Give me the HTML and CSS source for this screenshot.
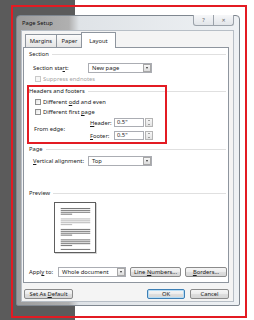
FILE: index.html
```html
<!DOCTYPE html>
<html lang="en">
<head>
  <meta charset="UTF-8">
  <title>Page Setup</title>
  <link rel="stylesheet" href="styles.css">
</head>
<body>
  <div class="shot">
    <div class="dialog">
      <div class="titlebar">
        <span class="title">Page Setup</span>
        <div class="caption">
          <span>?</span>
          <span class="close">✕</span>
        </div>
      </div>

      <div class="client">
        <div class="tabs">
          <div class="tab tab-margins">Margins</div>
          <div class="tab tab-paper">Paper</div>
          <div class="tab tab-layout active">Layout</div>
        </div>

        <div class="panel">
          <!-- Section -->
          <div class="group g-section">Section</div>
          <div class="field f-start">
            <label>Section sta<u>r</u>t:</label>
            <div class="combo"><span>New page</span><span class="drop"></span></div>
          </div>
          <div class="check disabled c-suppress"><span class="box"></span><span>Suppress endnotes</span></div>

          <!-- Headers and footers -->
          <div class="group g-hf">Headers and footers</div>
          <div class="check c-odd"><span class="box"></span><span>Different <u>o</u>dd and even</span></div>
          <div class="check c-first"><span class="box"></span><span>Different first <u>p</u>age</span></div>
          <div class="edge">
            <span class="edge-label">From edge:</span>
            <div class="edge-rows">
              <span><u>H</u>eader:</span>
              <div class="spin"><span class="val">0.5"</span><span class="arrows"><i class="up"></i><i class="down"></i></span></div>
              <span><u>F</u>ooter:</span>
              <div class="spin"><span class="val">0.5"</span><span class="arrows"><i class="up"></i><i class="down"></i></span></div>
            </div>
          </div>

          <!-- Page -->
          <div class="group g-page">Page</div>
          <div class="field f-valign">
            <label><u>V</u>ertical alignment:</label>
            <div class="combo"><span>Top</span><span class="drop"></span></div>
          </div>

          <!-- Preview -->
          <div class="group g-preview">Preview</div>
          <svg class="preview" width="42" height="51" viewBox="0 0 42 51">
            <g fill="#707070">
              <rect x="6" y="5" width="31" height="1"/>
              <rect x="6" y="7" width="31" height="1"/>
              <rect x="6" y="9" width="31" height="1"/>
              <rect x="6" y="11" width="12" height="1"/>
            </g>
            <g fill="#b4b4b4">
              <rect x="6" y="16" width="31" height="1"/>
              <rect x="6" y="18" width="31" height="1"/>
              <rect x="6" y="20" width="31" height="1"/>
              <rect x="6" y="22" width="12" height="1"/>
            </g>
            <g fill="#707070">
              <rect x="6" y="27" width="31" height="1"/>
              <rect x="6" y="29" width="31" height="1"/>
              <rect x="6" y="31" width="31" height="1"/>
              <rect x="6" y="33" width="12" height="1"/>
              <rect x="6" y="38" width="31" height="1"/>
              <rect x="6" y="40" width="31" height="1"/>
              <rect x="6" y="42" width="31" height="1"/>
              <rect x="6" y="44" width="12" height="1"/>
              <rect x="6" y="48" width="31" height="1"/>
            </g>
          </svg>

          <div class="apply">
            <label>Appl<u>y</u> to:</label>
            <div class="combo combo-wide"><span>Whole document</span><span class="drop"></span></div>
            <div class="btn btn-lines"><span>Line <u>N</u>umbers...</span></div>
            <div class="btn btn-borders"><span><u>B</u>orders...</span></div>
          </div>

          <!-- red highlight drawn over the headers group -->
          <div class="callout"></div>
        </div>

        <div class="footer">
          <div class="btn btn-default"><span>Set As <u>D</u>efault</span></div>
          <div class="btn btn-ok"><span>OK</span></div>
          <div class="btn btn-cancel"><span>Cancel</span></div>
        </div>
      </div>
    </div>
  </div>
</body>
</html>
```

FILE: styles.css
```css
/* page background: dark desktop on the left, white on the right */
body {
  margin: 0;
  padding: 5px 0 0 11px;
  box-sizing: border-box;
  width: 254px;
  height: 320px;
  overflow: hidden;
  background: linear-gradient(to right, #5b5b5b 0, #5b5b5b 75px, #fff 75px);
  font-family: "Noto Sans", "DejaVu Sans", sans-serif;
  font-size: 5.8px;
  color: #1b1b1b;
}

u {
  text-decoration-thickness: 1px;
}

/* red outline around the whole dialog */
.shot {
  box-sizing: border-box;
  width: 236px;
  height: 313px;
  border: 2px solid #e31b23;
  padding: 8px 0 0 3px;
}

/* window frame */
.dialog {
  box-sizing: border-box;
  width: 224px;
  height: 291px;
  border: 1px solid #7f8790;
  border-radius: 4px 4px 2px 2px;
  background: linear-gradient(to right, #9d9d9d 0, #b0b0b0 52px, #dfe3e7 62px, #eef1f4 100%);
  padding: 0 5px 3px 4px;
  display: flex;
  flex-direction: column;
}

.titlebar {
  height: 14px;
  flex: none;
  display: flex;
  justify-content: space-between;
  align-items: flex-start;
}
.title {
  line-height: 14px;
  padding-left: 1px;
  color: #111;
}
.caption {
  display: flex;
  margin-top: -1px;
}
.caption span {
  width: 19px;
  height: 10px;
  border: 1px solid #9ba2aa;
  border-top: none;
  background: linear-gradient(#f6f7f9, #e2e5e9);
  color: #666;
  font-size: 6px;
  display: flex;
  align-items: center;
  justify-content: center;
  border-radius: 0 0 0 3px;
}
.caption .close {
  border-left: none;
  border-radius: 0 0 3px 0;
  font-size: 5px;
}

/* client area */
.client {
  flex: 1;
  box-sizing: border-box;
  border: 1px solid #b7bec6;
  background: #f4f4f4;
  padding: 1px 4px 0 1px;
}

.tabs {
  height: 15px;
  display: flex;
  align-items: flex-end;
  padding-left: 2px;
}
.tab {
  box-sizing: border-box;
  height: 13px;
  border: 1px solid #8e959e;
  border-bottom: none;
  border-radius: 1px 1px 0 0;
  background: linear-gradient(#fbfbfb, #e4e4e4);
  display: flex;
  align-items: center;
  justify-content: center;
}
.tab + .tab {
  margin-left: -1px;
}
.tab-margins { width: 32px; }
.tab-paper { width: 27px; }
.tab.active {
  width: 35px;
  height: 16px;
  margin-left: -2px;
  margin-bottom: -1px;
  background: #fff;
  position: relative;
  z-index: 1;
}

.panel {
  box-sizing: border-box;
  height: 236px;
  border: 1px solid #8e959e;
  background: #fff;
  position: relative;
}

/* group headings with the rule that runs to the right */
.group {
  height: 8px;
  display: flex;
  align-items: center;
  padding-left: 5px;
  margin-right: 2px;
}
.group::after {
  content: "";
  flex: 1;
  height: 1px;
  background: #e0e0e0;
  margin-left: 3px;
}
.g-section { margin-top: 2px; }
.g-hf { margin-top: 5px; }
.g-page { margin-top: 5px; }
.g-preview { margin-top: 23px; }

.field {
  display: flex;
  align-items: center;
  padding-left: 9px;
}
.field label {
  width: 55px;
}
.f-start { margin-top: 5px; }
.f-valign { margin-top: 3px; }

.combo {
  box-sizing: border-box;
  width: 64px;
  height: 10px;
  border: 1px solid #abadb3;
  background: #fff;
  display: flex;
  align-items: center;
  padding-left: 3px;
}
.combo .drop {
  margin-left: auto;
  box-sizing: border-box;
  width: 8px;
  height: 8px;
  border: 1px solid #a7a7a7;
  background: linear-gradient(#f7f7f7, #dcdcdc);
  display: flex;
  align-items: center;
  justify-content: center;
}
.combo .drop::after {
  content: "";
  border-left: 1.5px solid transparent;
  border-right: 1.5px solid transparent;
  border-top: 2px solid #333;
}
.combo-wide {
  width: 68px;
}

.check {
  height: 6px;
  display: flex;
  align-items: center;
  gap: 2px;
  padding-left: 11px;
}
.check .box {
  box-sizing: border-box;
  width: 6px;
  height: 6px;
  border: 1px solid #8f8f8f;
  background: linear-gradient(135deg, #e2e2e2, #fff);
}
.check.disabled {
  color: #a4a4a4;
}
.check.disabled .box {
  border-color: #c9c9c9;
  background: #f7f7f7;
}
.c-suppress { margin-top: 3px; }
.c-odd { margin-top: 4px; }
.c-first { margin-top: 4px; }

.edge {
  margin-top: 3px;
  display: flex;
  align-items: center;
  padding-left: 10px;
}
.edge-label {
  width: 56px;
}
.edge-rows {
  display: grid;
  grid-template-columns: 24px auto;
  row-gap: 4px;
  align-items: center;
}
.spin {
  display: flex;
  gap: 1px;
}
.spin .val {
  box-sizing: border-box;
  width: 30px;
  height: 9px;
  border: 1px solid #abadb3;
  padding-left: 2px;
  line-height: 7px;
}
.spin .arrows {
  box-sizing: border-box;
  width: 8px;
  height: 9px;
  border: 1px solid #b4b4b4;
  background: linear-gradient(#f7f7f7, #e3e3e3);
  display: flex;
  flex-direction: column;
  align-items: center;
  justify-content: space-around;
}
.spin i {
  display: block;
  border-left: 1.5px solid transparent;
  border-right: 1.5px solid transparent;
}
.spin .up { border-bottom: 1.5px solid #555; }
.spin .down { border-top: 1.5px solid #555; }

.preview {
  display: block;
  margin: 5px 0 0 30px;
  box-sizing: border-box;
  border: 1px solid #5e5e5e;
  box-shadow: 1px 1px 0 #d4d4d4;
  background: #fff;
}

.apply {
  margin-top: 14px;
  display: flex;
  align-items: center;
  padding-left: 5px;
}
.apply label {
  width: 29px;
}

.btn {
  box-sizing: border-box;
  height: 10px;
  border: 1px solid #8b8b8b;
  border-radius: 2px;
  background: linear-gradient(#f5f5f5 0, #ececec 50%, #dedede 51%, #d6d6d6 100%);
  display: flex;
  align-items: center;
  justify-content: center;
}
.btn-lines { width: 51px; margin-left: 4px; }
.btn-borders { width: 42px; margin-left: 4px; }

.footer {
  margin-top: 6px;
  display: flex;
}
.btn-default { width: 49px; margin-left: 1px; }
.btn-ok {
  width: 38px;
  margin-left: auto;
  border-color: #3d7fb5;
  box-shadow: inset 0 0 0 1px #b6dcf5;
}
.btn-cancel { width: 39px; margin-left: 5px; }

/* annotation box over the headers and footers group */
.callout {
  position: absolute;
  left: 3px;
  top: 37px;
  width: 140px;
  height: 59px;
  box-sizing: border-box;
  border: 2px solid #e31b23;
}
```
